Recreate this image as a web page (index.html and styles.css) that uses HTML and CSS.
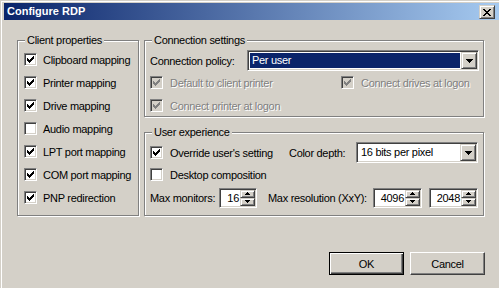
FILE: index.html
```html
<!DOCTYPE html>
<html lang="en">
<head>
  <meta charset="UTF-8">
  <title>Configure RDP</title>
  <link rel="stylesheet" href="styles.css">
</head>
<body>
  <div class="window">
    <div class="titlebar">
      <span class="title">Configure RDP</span>
      <span class="close-btn">
        <svg width="8" height="7" viewBox="0 0 8 7"><path d="M0 0h2v1H0zM6 0h2v1H6zM1 1h2v1H1zM5 1h2v1H5zM2 2h4v1H2zM3 3h2v1H3zM2 4h4v1H2zM1 5h2v1H1zM5 5h2v1H5zM0 6h2v1H0zM6 6h2v1H6z"/></svg>
      </span>
    </div>

    <div class="content">
      <div class="groups">

        <div class="group client-group">
          <span class="group-title">Client properties</span>
          <div class="check-row"><span class="checkbox"><svg viewBox="0 0 7 7"><path d="M6 0h1v1H6zM5 1h2v1H5zM0 2h1v1H0zM4 2h3v1H4zM0 3h2v1H0zM3 3h3v1H3zM0 4h5v1H0zM1 5h3v1H1zM2 6h1v1H2z"/></svg></span>Clipboard mapping</div>
          <div class="check-row"><span class="checkbox"><svg viewBox="0 0 7 7"><path d="M6 0h1v1H6zM5 1h2v1H5zM0 2h1v1H0zM4 2h3v1H4zM0 3h2v1H0zM3 3h3v1H3zM0 4h5v1H0zM1 5h3v1H1zM2 6h1v1H2z"/></svg></span>Printer mapping</div>
          <div class="check-row"><span class="checkbox"><svg viewBox="0 0 7 7"><path d="M6 0h1v1H6zM5 1h2v1H5zM0 2h1v1H0zM4 2h3v1H4zM0 3h2v1H0zM3 3h3v1H3zM0 4h5v1H0zM1 5h3v1H1zM2 6h1v1H2z"/></svg></span>Drive mapping</div>
          <div class="check-row"><span class="checkbox"></span>Audio mapping</div>
          <div class="check-row"><span class="checkbox"><svg viewBox="0 0 7 7"><path d="M6 0h1v1H6zM5 1h2v1H5zM0 2h1v1H0zM4 2h3v1H4zM0 3h2v1H0zM3 3h3v1H3zM0 4h5v1H0zM1 5h3v1H1zM2 6h1v1H2z"/></svg></span>LPT port mapping</div>
          <div class="check-row"><span class="checkbox"><svg viewBox="0 0 7 7"><path d="M6 0h1v1H6zM5 1h2v1H5zM0 2h1v1H0zM4 2h3v1H4zM0 3h2v1H0zM3 3h3v1H3zM0 4h5v1H0zM1 5h3v1H1zM2 6h1v1H2z"/></svg></span>COM port mapping</div>
          <div class="check-row"><span class="checkbox"><svg viewBox="0 0 7 7"><path d="M6 0h1v1H6zM5 1h2v1H5zM0 2h1v1H0zM4 2h3v1H4zM0 3h2v1H0zM3 3h3v1H3zM0 4h5v1H0zM1 5h3v1H1zM2 6h1v1H2z"/></svg></span>PNP redirection</div>
        </div>

        <div class="group conn-group">
          <span class="group-title">Connection settings</span>
          <div class="field-row">
            <span class="policy-label">Connection policy:</span>
            <div class="combo policy-combo">
              <span class="combo-value selected">Per user</span>
              <span class="combo-btn"><svg width="7" height="4" viewBox="0 0 7 4"><path d="M0 0h7v1H0zM1 1h5v1H1zM2 2h3v1H2zM3 3h1v1H3z"/></svg></span>
            </div>
          </div>
          <div class="conn-options">
            <div class="check-row wide disabled"><span class="checkbox"><svg viewBox="0 0 7 7"><path d="M6 0h1v1H6zM5 1h2v1H5zM0 2h1v1H0zM4 2h3v1H4zM0 3h2v1H0zM3 3h3v1H3zM0 4h5v1H0zM1 5h3v1H1zM2 6h1v1H2z"/></svg></span>Default to client printer</div>
            <div class="check-row wide disabled"><span class="checkbox"><svg viewBox="0 0 7 7"><path d="M6 0h1v1H6zM5 1h2v1H5zM0 2h1v1H0zM4 2h3v1H4zM0 3h2v1H0zM3 3h3v1H3zM0 4h5v1H0zM1 5h3v1H1zM2 6h1v1H2z"/></svg></span>Connect drives at logon</div>
            <div class="check-row wide disabled"><span class="checkbox"><svg viewBox="0 0 7 7"><path d="M6 0h1v1H6zM5 1h2v1H5zM0 2h1v1H0zM4 2h3v1H4zM0 3h2v1H0zM3 3h3v1H3zM0 4h5v1H0zM1 5h3v1H1zM2 6h1v1H2z"/></svg></span>Connect printer at logon</div>
          </div>
        </div>

        <div class="group user-group">
          <span class="group-title">User experience</span>
          <div class="field-row">
            <div class="check-row wide override"><span class="checkbox"><svg viewBox="0 0 7 7"><path d="M6 0h1v1H6zM5 1h2v1H5zM0 2h1v1H0zM4 2h3v1H4zM0 3h2v1H0zM3 3h3v1H3zM0 4h5v1H0zM1 5h3v1H1zM2 6h1v1H2z"/></svg></span>Override user's setting</div>
            <span class="depth-label">Color depth:</span>
            <div class="combo depth-combo">
              <span class="combo-value">16 bits per pixel</span>
              <span class="combo-btn"><svg width="7" height="4" viewBox="0 0 7 4"><path d="M0 0h7v1H0zM1 1h5v1H1zM2 2h3v1H2zM3 3h1v1H3z"/></svg></span>
            </div>
          </div>
          <div class="check-row wide"><span class="checkbox"></span>Desktop composition</div>
          <div class="spin-row">
            <span class="monitors-label">Max monitors:</span>
            <div class="spin spin-small">
              <span class="spin-value">16</span>
              <span class="spin-btns">
                <span class="spin-btn"><svg width="5" height="3" viewBox="0 0 5 3"><path d="M2 0h1v1H2zM1 1h3v1H1zM0 2h5v1H0z"/></svg></span>
                <span class="spin-btn"><svg width="5" height="3" viewBox="0 0 5 3"><path d="M0 0h5v1H0zM1 1h3v1H1zM2 2h1v1H2z"/></svg></span>
              </span>
            </div>
            <span class="res-label">Max resolution (XxY):</span>
            <div class="spin">
              <span class="spin-value">4096</span>
              <span class="spin-btns">
                <span class="spin-btn"><svg width="5" height="3" viewBox="0 0 5 3"><path d="M2 0h1v1H2zM1 1h3v1H1zM0 2h5v1H0z"/></svg></span>
                <span class="spin-btn"><svg width="5" height="3" viewBox="0 0 5 3"><path d="M0 0h5v1H0zM1 1h3v1H1zM2 2h1v1H2z"/></svg></span>
              </span>
            </div>
            <div class="spin spin-last">
              <span class="spin-value">2048</span>
              <span class="spin-btns">
                <span class="spin-btn"><svg width="5" height="3" viewBox="0 0 5 3"><path d="M2 0h1v1H2zM1 1h3v1H1zM0 2h5v1H0z"/></svg></span>
                <span class="spin-btn"><svg width="5" height="3" viewBox="0 0 5 3"><path d="M0 0h5v1H0zM1 1h3v1H1zM2 2h1v1H2z"/></svg></span>
              </span>
            </div>
          </div>
        </div>

      </div>

      <div class="buttons">
        <button class="btn default">OK</button>
        <button class="btn">Cancel</button>
      </div>
    </div>
  </div>
</body>
</html>
```

FILE: styles.css
```css
* {
  box-sizing: border-box;
  margin: 0;
  padding: 0;
}

body {
  background: #d4d0c8;
  font-family: "Liberation Sans", Arial, sans-serif;
  font-size: 11px;
  letter-spacing: -0.3px;
  color: #000;
  width: 499px;
  height: 288px;
  overflow: hidden;
}

/* window frame */
.window {
  margin: 1px 0 0 1px;
  height: 287px;
  border-left: 1px solid #fff;
  border-top: 1px solid #fff;
}

.titlebar {
  margin: 1px 0 0 2px;
  height: 17px;
  padding: 0 4px 0 3px;
  display: flex;
  justify-content: space-between;
  background: linear-gradient(to right, #0a246a, #a6caf0);
}

.title {
  color: #fff;
  font-weight: bold;
  line-height: 17px;
  letter-spacing: 0;
}

.close-btn {
  margin-top: 2px;
  width: 16px;
  height: 14px;
  display: flex;
  align-items: center;
  justify-content: center;
  background: #d4d0c8;
  border: 1px solid;
  border-color: #d4d0c8 #404040 #404040 #d4d0c8;
  box-shadow: inset 1px 1px #fff, inset -1px -1px #808080;
}

.content {
  width: 483px;
  padding: 20px 0 0 15px;
}

/* group boxes */
.groups {
  display: grid;
  grid-template-columns: 122px 340px;
  grid-template-rows: 77px 84px;
  column-gap: 5px;
  row-gap: 15px;
}

.group {
  position: relative;
  border: 1px solid #808080;
  box-shadow: inset 1px 1px #fff, 1px 1px #fff;
}

.group-title {
  position: absolute;
  top: -7px;
  left: 7px;
  padding: 0 2px;
  line-height: 13px;
  background: #d4d0c8;
}

.client-group {
  grid-row: 1 / 3;
  padding: 7px 0 0 6px;
}

.conn-group,
.user-group {
  padding: 9px 4px 0 5px;
}

/* check boxes */
.check-row {
  height: 23px;
  display: flex;
  align-items: center;
  gap: 6px;
  white-space: nowrap;
}

.check-row.wide {
  gap: 7px;
}

.checkbox {
  flex: none;
  width: 13px;
  height: 13px;
  display: flex;
  align-items: center;
  justify-content: center;
  background: #fff;
  border: 1px solid;
  border-color: #808080 #fff #fff #808080;
  box-shadow: inset 1px 1px #404040, inset -1px -1px #d4d0c8;
}

.checkbox svg {
  width: 7px;
  height: 7px;
  fill: #000;
}

.disabled {
  color: #808080;
  text-shadow: 1px 1px #fff;
}

.disabled .checkbox {
  background: #d4d0c8;
}

.disabled .checkbox svg {
  fill: #808080;
}

/* combo boxes */
.field-row {
  height: 21px;
  display: flex;
  align-items: center;
}

.policy-label {
  width: 97px;
}

.combo {
  height: 21px;
  display: flex;
  background: #fff;
  border: 1px solid;
  border-color: #808080 #fff #fff #808080;
  box-shadow: inset 1px 1px #404040, inset -1px -1px #d4d0c8;
  padding: 1px;
}

.policy-combo {
  width: 232px;
}

.depth-combo {
  width: 122px;
}

.combo-value {
  flex: 1;
  margin: 1px;
  padding-left: 2px;
  line-height: 15px;
  white-space: nowrap;
}

.combo-value.selected {
  background: #0a246a;
  color: #fff;
}

.combo-btn {
  width: 16px;
  height: 17px;
  display: flex;
  align-items: center;
  justify-content: center;
  background: #d4d0c8;
  border: 1px solid;
  border-color: #d4d0c8 #404040 #404040 #d4d0c8;
  box-shadow: inset 1px 1px #fff, inset -1px -1px #808080;
}

.conn-options {
  display: grid;
  grid-template-columns: 191px 140px;
}

.override {
  width: 139px;
}

.depth-label {
  width: 67px;
}

/* spin boxes */
.spin-row {
  height: 23px;
  display: flex;
  align-items: center;
}

.monitors-label {
  width: 69px;
}

.res-label {
  width: 105px;
  margin-left: 11px;
}

.spin {
  width: 49px;
  height: 20px;
  display: flex;
  background: #fff;
  border: 1px solid;
  border-color: #808080 #fff #fff #808080;
  box-shadow: inset 1px 1px #404040, inset -1px -1px #d4d0c8;
  padding: 1px;
}

.spin-small {
  width: 38px;
}

.spin-last {
  margin-left: 7px;
}

.spin-value {
  flex: 1;
  text-align: right;
  padding-right: 1px;
  line-height: 16px;
}

.spin-btns {
  width: 15px;
  display: flex;
  flex-direction: column;
}

.spin-btn {
  height: 8px;
  display: flex;
  align-items: center;
  justify-content: center;
  background: #d4d0c8;
  border: 1px solid;
  border-color: #d4d0c8 #404040 #404040 #d4d0c8;
  box-shadow: inset 1px 1px #fff, inset -1px -1px #808080;
}

.spin-btn svg {
  fill: #000;
}

/* dialog buttons */
.buttons {
  margin-top: 36px;
  display: flex;
  justify-content: flex-end;
  gap: 6px;
}

.btn {
  width: 75px;
  height: 23px;
  font: inherit;
  letter-spacing: inherit;
  color: #000;
  background: #d4d0c8;
  border: 1px solid;
  border-color: #fff #404040 #404040 #fff;
  box-shadow: inset -1px -1px #808080;
}

.btn.default {
  border-color: #000;
  box-shadow: inset 1px 1px #fff, inset -1px -1px #404040, inset -2px -2px #808080;
}
```
